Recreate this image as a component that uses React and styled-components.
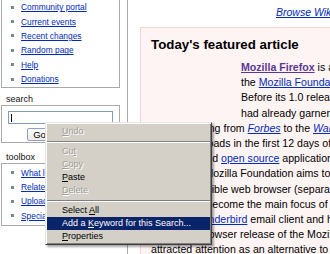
import styled, { createGlobalStyle } from "styled-components";

const GlobalStyle = createGlobalStyle`
  html, body {
    margin: 0;
    padding: 0;
    background: #fff;
    overflow: hidden;
  }
  body {
    font-family: "Liberation Sans", Arial, sans-serif;
    color: #000;
  }
  #root {
    width: 330px;
    height: 254px;
    overflow: hidden;
  }
`;

const navLinks = [
  "Community portal",
  "Current events",
  "Recent changes",
  "Random page",
  "Help",
  "Donations",
];

const toolLinks = ["What links here", "Related changes", "Upload file", "Special pages"];

const App = () => {
  return (
    <>
      <GlobalStyle />
      <Page>
        <Sidebar>
          <Portlet $top={-5}>
            <PBody $pad="4px 0 1px">
              <LinkList>
                {navLinks.map((l) => (
                  <li key={l}>
                    <a href="#">{l}</a>
                  </li>
                ))}
              </LinkList>
            </PBody>
          </Portlet>

          <Portlet $top={4.6}>
            <Label>search</Label>
            <PBody $pad="5px 6px 1px">
              <SearchField>
                <Caret />
              </SearchField>
              <ButtonRow>
                <SearchButton $w={25}>Go</SearchButton>
                <SearchButton $w={39}>Search</SearchButton>
              </ButtonRow>
            </PBody>
          </Portlet>

          <Portlet $top={8}>
            <Label>toolbox</Label>
            <PBody $pad="1.5px 0 1.5px">
              <LinkList>
                {toolLinks.map((l) => (
                  <li key={l}>
                    <a href="#">{l}</a>
                  </li>
                ))}
              </LinkList>
            </PBody>
          </Portlet>
        </Sidebar>

        <Content>
          <TopBar>
            <a href="#">Browse Wikipedia</a>
          </TopBar>
          <FeatureBox>
            <h2>Today's featured article</h2>
            <ArticleImage />
            <Line>
              <ArticleLink href="#" $visited>
                <b>Mozilla Firefox</b>
              </ArticleLink>{" "}
              is a free, cross-platform web browser by
            </Line>
            <Line>
              the <ArticleLink href="#">Mozilla Foundation</ArticleLink> and hundreds of volunteers.
            </Line>
            <Line>Before its 1.0 release on November 9, 2004, Firefox</Line>
            <Line>had already garnered acclaim from numerous media</Line>
            <Line>
              outlets ranging from{" "}
              <ArticleLink href="#">
                <i>Forbes</i>
              </ArticleLink>{" "}
              to the{" "}
              <ArticleLink href="#">
                <i>Wall Street Journal</i>
              </ArticleLink>
              . With
            </Line>
            <Line>many downloads in the first 12 days of its release,</Line>
            <Line>
              It is a free and <ArticleLink href="#">open source</ArticleLink> application, and
            </Line>
            <Line>better. The Mozilla Foundation aims to create a</Line>
            <Line>safe, compatible web browser (separate from the</Line>
            <Line>Firefox has become the main focus of Mozilla</Line>
            <Line>
              with the <ArticleLink href="#">Thunderbird</ArticleLink> email client and has
            </Line>
            <Line>a flagship browser release of the Mozilla Foundation</Line>
            <Line>attracted attention as an alternative to Internet Explorer</Line>
          </FeatureBox>
        </Content>

        <ContextMenu>
          <MenuItem $disabled>
            <u>U</u>ndo
          </MenuItem>
          <Separator />
          <MenuItem $disabled>
            Cu<u>t</u>
          </MenuItem>
          <MenuItem $disabled>
            <u>C</u>opy
          </MenuItem>
          <MenuItem>
            <u>P</u>aste
          </MenuItem>
          <MenuItem $disabled>
            <u>D</u>elete
          </MenuItem>
          <Separator />
          <MenuItem>
            Select <u>A</u>ll
          </MenuItem>
          <MenuItem $active>
            Add a <u>K</u>eyword for this Search...
          </MenuItem>
          <MenuItem>
            <u>P</u>roperties
          </MenuItem>
        </ContextMenu>
      </Page>
    </>
  );
};

const Page = styled.div`
  position: relative;
  display: flex;
  height: 254px;
  overflow: hidden;
`;

const Sidebar = styled.div`
  flex: 0 0 121px;
  display: flex;
  flex-direction: column;
`;

const Portlet = styled.div`
  margin-top: ${(p) => p.$top}px;
`;

const Label = styled.h5`
  margin: 0 0 0 6px;
  font-size: 9px;
  line-height: 12px;
  font-weight: normal;
  color: #111;
`;

const PBody = styled.div`
  margin-left: 1px;
  width: 119px;
  box-sizing: border-box;
  border: 1px solid #aaa;
  background: #fff;
  padding: ${(p) => p.$pad};
`;

const LinkList = styled.ul`
  list-style: none;
  margin: 0;
  padding: 0 0 0 9px;
  li {
    display: flex;
    align-items: center;
    gap: 7px;
    height: 14.4px;
    font-size: 8.4px;
    white-space: nowrap;
    &::before {
      content: "";
      width: 3px;
      height: 3px;
      background: #6f8f88;
      flex: none;
    }
  }
  a {
    color: #002bb8;
    text-decoration: underline;
  }
`;

const SearchField = styled.div`
  box-sizing: border-box;
  width: 105px;
  height: 13px;
  border: 1px solid #7f9db9;
  background: #fff;
  padding: 2px 0 0 2px;
`;

const Caret = styled.span`
  display: block;
  width: 1px;
  height: 8px;
  background: #000;
`;

const ButtonRow = styled.div`
  display: flex;
  justify-content: center;
  gap: 3px;
  margin-top: 4px;
`;

const SearchButton = styled.button`
  box-sizing: border-box;
  width: ${(p) => p.$w}px;
  height: 13px;
  padding: 0;
  border: 1px solid #8ea3c2;
  border-radius: 2px;
  background: linear-gradient(#fdfdfb, #ecebe6);
  font-family: "Liberation Sans", Arial, sans-serif;
  font-size: 9.5px;
  line-height: 11px;
  color: #000;
`;

const Content = styled.div`
  flex: 0 0 420px;
  margin-left: 6px;
  border-left: 1px solid #aaa;
  padding-top: 5px;
  background: #fff;
`;

const TopBar = styled.div`
  padding-left: 148px;
  line-height: 14px;
  font-size: 10.5px;
  font-style: italic;
  white-space: nowrap;
  a {
    color: #002bb8;
  }
`;

const FeatureBox = styled.div`
  margin: 8px 0 0 12px;
  border: 1px solid #f3d3d3;
  background: #fff4f4;
  padding: 8px 0 0 10px;
  min-height: 300px;
  h2 {
    margin: 0 0 7px;
    font-size: 13.3px;
    line-height: 17px;
    font-weight: bold;
    white-space: nowrap;
  }
`;

const ArticleImage = styled.div`
  float: left;
  width: 90px;
  height: 60px;
`;

const Line = styled.div`
  white-space: nowrap;
  font-size: 10.6px;
  line-height: 15.2px;
`;

const ArticleLink = styled.a`
  color: ${(p) => (p.$visited ? "#5a3696" : "#002bb8")};
  text-decoration: underline;
`;

const ContextMenu = styled.div`
  position: absolute;
  left: 45px;
  top: 122px;
  width: 167px;
  box-sizing: border-box;
  padding: 1px 0 0;
  background: #d4d0c8;
  border: 1px solid;
  border-color: #e8e6e1 #404040 #404040 #e8e6e1;
  box-shadow: inset 1px 1px 0 #fff, inset -1px -1px 0 #808080,
    2px 2px 2px rgba(0, 0, 0, 0.35);
  padding: 2px 1px 1px;
`;

const MenuItem = styled.div`
  height: 13px;
  line-height: 13px;
  padding-left: 15px;
  font-size: 9px;
  white-space: nowrap;
  color: ${(p) => (p.$active ? "#fff" : p.$disabled ? "#a09d96" : "#000")};
  background: ${(p) => (p.$active ? "#0a246a" : "transparent")};
  text-shadow: ${(p) => (p.$disabled ? "1px 1px 0 #fff" : "none")};
  u {
    text-underline-offset: 1px;
  }
`;

const Separator = styled.div`
  margin: 3px 0 2px;
  border-top: 1px solid #808080;
  border-bottom: 1px solid #fff;
`;

export default App;
